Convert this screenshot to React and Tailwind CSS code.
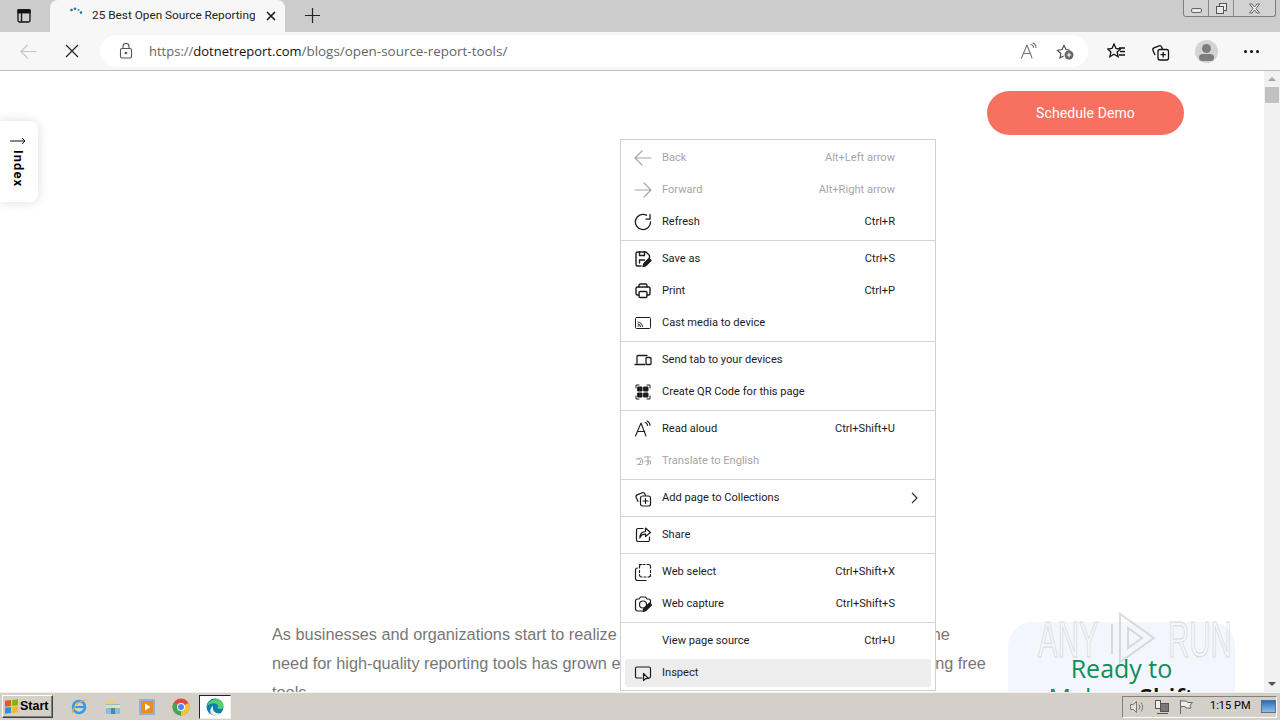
import React from "react";

const Ic = ({ children, size = 18, stroke = "currentColor", w = 1.2, className = "" }) => (
  <svg width={size} height={size} viewBox="0 0 18 18" fill="none" stroke={stroke} strokeWidth={w} strokeLinecap="round" strokeLinejoin="round" className={className}>
    {children}
  </svg>
);

const icons = {
  back: <Ic><path d="M17 9H1M8 2 1 9l7 7" /></Ic>,
  forward: <Ic><path d="M1 9h16M10 2l7 7-7 7" /></Ic>,
  refresh: <Ic w={1.3}><path d="M12.5 2.2A7.6 7.6 0 1 0 16.6 9" /><path d="M12 6.2h4V1.6" /></Ic>,
  save: (
    <Ic w={1.4}>
      <path d="M7 16H3.5A1.5 1.5 0 0 1 2 14.5v-11A1.5 1.5 0 0 1 3.5 2h8.5l3.5 3.5V8" />
      <path d="M5.5 2v3.5h5V2M5.5 13v-3h5" />
      <path d="M9 16.5l1-3 5-5 2 2-5 5z" fill="currentColor" />
    </Ic>
  ),
  print: (
    <Ic w={1.4}>
      <path d="M5 5V3.5A1.5 1.5 0 0 1 6.500 2h5A1.500 1.500 0 0 1 13 3.500V5" />
      <path d="M5 13H3.500A1.500 1.500 0 0 1 2 11.500v-5A1.500 1.500 0 0 1 3.500 5h11A1.500 1.500 0 0 1 16 6.500v5a1.500 1.500 0 0 1-1.500 1.500H13" />
      <rect x="5" y="9.500" width="8" height="6" rx="1.200" />
    </Ic>
  ),
  cast: (
    <Ic w={1}>
      <rect x="1.500" y="3.500" width="15" height="11" rx="1" />
      <path d="M4 8a4.500 4.500 0 0 1 4.500 4.500M4 10a2.500 2.500 0 0 1 2.500 2.500M4 12h.8" />
    </Ic>
  ),
  send: (
    <Ic w={1.3}>
      <path d="M3 12V5.500A1 1 0 0 1 4 4.500h9M1 13.500h10" />
      <rect x="12" y="6.500" width="5" height="7" rx="1" />
    </Ic>
  ),
  qr: (
    <Ic w={1}>
      <path d="M2 5V2h3M13 2h3v3M16 13v3h-3M5 16H2v-3" />
      <rect x="4" y="4" width="4" height="4" fill="currentColor" />
      <rect x="10" y="4" width="4" height="4" fill="currentColor" />
      <rect x="4" y="10" width="4" height="4" fill="currentColor" />
      <rect x="10" y="10" width="4" height="4" fill="currentColor" />
    </Ic>
  ),
  read: (
    <Ic w={1.1}>
      <path d="M1.500 16 7 3l5 13M3.300 11.500h7.400" />
      <path d="M11 2.500a3 3 0 0 1 2.500 3M13 1a5 5 0 0 1 3 4.500" />
    </Ic>
  ),
  translate: (
    <Ic w={1}>
      <path d="M2 7a3 3 0 1 1 1.500 5.500H7.500a1 1 0 0 0 1-1V8.500a2.500 2.500 0 0 0-4.500-1.500" />
      <path d="M10.500 9.500a2.200 2.200 0 1 1 2 3.500M10.500 5h6M14 5v8M14 9h2.500v3" />
    </Ic>
  ),
  collections: (
    <Ic w={1.2}>
      <path d="M4 12.500 2.200 8.500a2 2 0 0 1 1-2.600l5-2.100a2 2 0 0 1 2.600 1L11.500 6.500" />
      <rect x="6.500" y="7" width="10" height="10" rx="2" />
      <path d="M11.500 9.500v5M9 12h5" />
    </Ic>
  ),
  share: (
    <Ic w={1.2}>
      <path d="M9 2.500H4A1.500 1.500 0 0 0 2.500 4v10A1.500 1.500 0 0 0 4 15.500h10a1.500 1.500 0 0 0 1.500-1.500v-3" />
      <path d="M11.500 2 16.500 6.500 11.500 10.500V8.200C8.500 8.200 6.800 9.500 5.800 12c0-4 2.200-6.500 5.700-6.500z" />
    </Ic>
  ),
  select: (
    <Ic w={1.2}>
      <path d="M5.500 1.500h1.500M9 1.500h2M13 1.500h1.500a2 2 0 0 1 2 2V5M16.500 7.500v2M16.500 11.500v.5a2 2 0 0 1-2 2H14M12 14h-2M8 14H7.500a2 2 0 0 1-2-2v-.5M5.500 9.500v-2M5.500 5V3.500a2 2 0 0 1 2-2" />
      <path d="M3.500 5A2 2 0 0 0 1.500 7v8.500a2 2 0 0 0 2 2H12" />
    </Ic>
  ),
  capture: (
    <Ic w={1.2}>
      <path d="M8 16H3.500a2 2 0 0 1-2-2V6a2 2 0 0 1 2-2H5L6.500 2h5L13 4h1.500a2 2 0 0 1 2 2v2" />
      <circle cx="9" cy="9.500" r="3.500" />
      <path d="M9 16.500l.8-2.800 5.700-5.700 2 2-5.700 5.700z" fill="currentColor" />
    </Ic>
  ),
  inspect: (
    <Ic w={1.2}>
      <path d="M8 14H3a1.500 1.500 0 0 1-1.500-1.500v-8A1.500 1.500 0 0 1 3 3h12a1.500 1.500 0 0 1 1.500 1.500v8A1.500 1.500 0 0 1 15 14h-.5" />
      <path d="M9.500 9.500v7l2-1.800 3-.2z" />
    </Ic>
  ),
};

const menuGroups = [
  [
    { label: "Back", key: "Alt+Left arrow", icon: "back", off: true },
    { label: "Forward", key: "Alt+Right arrow", icon: "forward", off: true },
    { label: "Refresh", key: "Ctrl+R", icon: "refresh" },
  ],
  [
    { label: "Save as", key: "Ctrl+S", icon: "save" },
    { label: "Print", key: "Ctrl+P", icon: "print" },
    { label: "Cast media to device", icon: "cast" },
  ],
  [
    { label: "Send tab to your devices", icon: "send" },
    { label: "Create QR Code for this page", icon: "qr" },
  ],
  [
    { label: "Read aloud", key: "Ctrl+Shift+U", icon: "read" },
    { label: "Translate to English", icon: "translate", off: true },
  ],
  [{ label: "Add page to Collections", icon: "collections", more: true }],
  [{ label: "Share", icon: "share" }],
  [
    { label: "Web select", key: "Ctrl+Shift+X", icon: "select" },
    { label: "Web capture", key: "Ctrl+Shift+S", icon: "capture" },
  ],
  [
    { label: "View page source", key: "Ctrl+U" },
    { label: "Inspect", icon: "inspect", hover: true },
  ],
];

function MenuRow({ item }) {
  return (
    <div className={`h-[32px] flex items-center pl-[13px] pr-[40px] ${item.off ? "text-[#a6a6a6]" : "text-[#1c1c1c]"} relative`}>
      {item.hover && <div className="absolute left-[4px] right-[4px] top-[2px] bottom-[2px] bg-[#ededed] rounded-[3px]"></div>}
      <span className="w-[28px] shrink-0 relative">{item.icon && icons[item.icon]}</span>
      <span className="flex-1 relative">{item.label}</span>
      {item.key && <span className="relative">{item.key}</span>}
      {item.more && (
        <svg width="10" height="12" viewBox="0 0 10 12" fill="none" stroke="#333" strokeWidth="1.2" className="absolute right-[15px]">
          <path d="M2 1l5 5-5 5" />
        </svg>
      )}
    </div>
  );
}

function ContextMenu() {
  return (
    <div className="absolute left-[620px] top-[68px] w-[316px] bg-white border border-[#d0d0d0] pt-[2px] pb-[1px] text-[11.1px] font-['Roboto',sans-serif]">
      {menuGroups.map((group, i) => (
        <div key={i} className={i > 0 ? "border-t border-[#d4d4d4] pt-[2px] mt-[2px]" : ""}>
          {group.map((item) => (
            <MenuRow key={item.label} item={item} />
          ))}
        </div>
      ))}
    </div>
  );
}

function TabBar() {
  return (
    <div className="h-[32px] bg-[#cccccc] flex items-end relative shrink-0">
      <div className="w-[50px] h-full flex items-center justify-center">
        <svg width="16" height="16" viewBox="0 0 16 16" fill="none" stroke="#111" strokeWidth="1.300" className="ml-[-2px]">
          <rect x="2" y="2" width="12" height="12" rx="1.500" />
          <path d="M2 4.500h12M5.500 4.500V14" />
          <path d="M2 2h12v2.500H2z" fill="#111" />
        </svg>
      </div>
      <div className="w-[235px] h-full bg-[#f7f7f7] rounded-t-[8px] flex items-center pl-[20px] text-[11.8px] text-[#222] font-['Roboto',sans-serif]">
        <svg width="14" height="10" viewBox="0 0 14 10" className="mt-[-8px] shrink-0" fill="#1a6fb0">
          <circle cx="1.500" cy="3" r="1.300" />
          <circle cx="5" cy="1.800" r="1.300" />
          <circle cx="8.500" cy="3" r="1" fill="#5c7f99" />
          <circle cx="11" cy="5.500" r="1.300" />
        </svg>
        <span className="ml-[8px] w-[163px] whitespace-nowrap overflow-hidden">25 Best Open Source Reporting Tools</span>
        <svg width="10" height="10" viewBox="0 0 10 10" stroke="#111" strokeWidth="1.500" className="ml-[11px]">
          <path d="M1 1l8 8M9 1l-8 8" />
        </svg>
      </div>
      <div className="h-full flex items-center ml-[20px] pb-[1px]">
        <svg width="15" height="15" viewBox="0 0 15 15" stroke="#222" strokeWidth="1.200">
          <path d="M7.500 0v15M0 7.500h15" />
        </svg>
      </div>
      <div className="absolute right-[4px] top-0 h-[17px] w-[93px] flex border border-t-0 border-[#7f7f7f] rounded-b-[3px] bg-[#d2d2d2]">
        <div className="w-[25px] border-r border-[#8a8a8a] flex items-center justify-center">
          <div className="w-[11px] h-[5px] mt-[4px] border border-[#666] rounded-[2px] bg-[#e8e8e8]"></div>
        </div>
        <div className="w-[25px] border-r border-[#8a8a8a] flex items-center justify-center">
          <svg width="13" height="13" viewBox="0 0 13 13" fill="#e8e8e8" stroke="#555">
            <rect x="4.500" y="1.500" width="7" height="7" />
            <rect x="1.500" y="4.500" width="7" height="7" />
          </svg>
        </div>
        <div className="flex-1 flex items-center justify-center">
          <svg width="13" height="11" viewBox="0 0 13 11" stroke="#666" fill="none">
            <path d="M1.500 1h2.500l2.500 3L9 1h2.500l-3.500 4.500 3.500 4.500H9L6.500 7 4 10H1.500L5 5.500z" fill="#eee" />
          </svg>
        </div>
      </div>
    </div>
  );
}

function ToolBar() {
  return (
    <div className="h-[39px] bg-[#f7f7f7] border-b border-[#bdbdbd] flex items-center shrink-0 text-[#222]">
      <div className="w-[100px] flex items-center pl-[20px]">
        <Ic size={17} stroke="#c4c4c4" w={1.300}><path d="M17 9H1M8 2 1 9l7 7" /></Ic>
        <svg width="14" height="14" viewBox="0 0 14 14" stroke="#222" strokeWidth="1.200" className="ml-[28px]">
          <path d="M1 1l12 12M13 1 1 13" />
        </svg>
      </div>
      <div className="w-[988px] h-[32px] bg-white rounded-full flex items-center pl-[19px] pr-[14px]">
        <svg width="14" height="16" viewBox="0 0 14 16" fill="none" stroke="#555" strokeWidth="1.100">
          <rect x="1.500" y="5.500" width="11" height="9.500" rx="1.500" />
          <path d="M4 5.500V3.500a3 3 0 0 1 6 0v2" />
          <circle cx="7" cy="10" r=".8" fill="#555" />
        </svg>
        <span className="ml-[16px] pt-[1px] text-[13px] text-[#666] font-['Open_Sans',sans-serif]">
          https://<span className="text-[#111]">dotnetreport.com</span>
          <span className="text-[13.45px]">/blogs/open-source-report-tools/</span>
        </span>
        <div className="ml-auto flex items-center gap-[18px] text-[#777]">
          <Ic size={18} w={1.100} className="ml-[1px]">
            <path d="M1.500 16 7 3l5 13M3.300 11.500h7.400" />
            <path d="M11 2.500a3 3 0 0 1 2.500 3M13 1a5 5 0 0 1 3 4.500" />
          </Ic>
          <svg width="18" height="18" viewBox="0 0 18 18" fill="none" stroke="#444" strokeWidth="1.100">
            <path d="M7.500 14 4 16l.8-4.500L1.500 8.300l4.500-.7L8 3.500l2 4.100 3.500.5" />
            <circle cx="13" cy="13" r="4.500" fill="#666" stroke="none" />
            <path d="M13 10.800v4.400M10.800 13h4.400" stroke="#fff" />
          </svg>
        </div>
      </div>
      <div className="flex-1 flex items-center pl-[19px] gap-[25px]">
        <svg width="19" height="19" viewBox="0 0 19 19" fill="none" stroke="#111" strokeWidth="1.300">
          <path d="M7 2 9 6.500l4.500.5-3.400 3 1 4.700L7 12.300l-4.100 2.400 1-4.700L.6 7 5 6.500z" />
          <path d="M12 6h6M13 9.500h5M12 13h6" />
        </svg>
        <svg width="19" height="19" viewBox="0 0 19 19" fill="none" stroke="#111" strokeWidth="1.300">
          <path d="M4 13 2 8.500a2 2 0 0 1 1-2.600l5-2a2 2 0 0 1 2.600 1L11.500 7" />
          <rect x="7" y="7.500" width="10.500" height="10.500" rx="2" />
          <path d="M12.200 10v5.500M9.500 12.700H15" />
        </svg>
        <div className="w-[23px] h-[23px] rounded-full bg-[#d4d4d4] overflow-hidden relative">
          <div className="absolute left-[7px] top-[4px] w-[9px] h-[9px] rounded-full bg-[#7d7d7d]"></div>
          <div className="absolute left-[4px] top-[14px] w-[15px] h-[7px] rounded-full bg-[#7d7d7d]"></div>
        </div>
        <div className="ml-[1px] flex gap-[3px]">
          <span className="w-[3px] h-[3px] bg-[#111] rounded-full"></span>
          <span className="w-[3px] h-[3px] bg-[#111] rounded-full"></span>
          <span className="w-[3px] h-[3px] bg-[#111] rounded-full"></span>
        </div>
      </div>
    </div>
  );
}

function Scrollbar() {
  return (
    <div className="w-[16px] bg-[#f1f1f1] flex flex-col items-center justify-between shrink-0">
      <div className="w-full">
        <div className="h-[16px] flex items-center justify-center">
          <div className="border-x-[4px] border-x-transparent border-b-[4px] border-b-[#a3a3a3]"></div>
        </div>
        <div className="h-[16px] bg-[#c1c1c1] mx-[1px]"></div>
      </div>
      <div className="h-[16px] flex items-center justify-center">
        <div className="border-x-[4px] border-x-transparent border-t-[4px] border-t-[#505050]"></div>
      </div>
    </div>
  );
}

function Page() {
  return (
    <div className="flex-1 flex flex-col overflow-hidden min-w-0">
      <div className="flex justify-end pr-[80px] pt-[20px] shrink-0">
        <button className="w-[197px] h-[44px] rounded-full bg-[#f87060] text-white text-[14px] tracking-[0.1px] font-['Roboto',sans-serif]">
          Schedule Demo
        </button>
      </div>
      <div className="flex mt-[487px] shrink-0">
        <p className="ml-[272px] mt-[-2px] w-[713px] shrink-0 text-[16.3px] leading-[29px] text-[#777777] font-['Liberation_Sans',sans-serif] whitespace-nowrap">
          As businesses and organizations start to realize the value of the data and reporting needs, the
          <br />
          need for high-quality reporting tools has grown exponentially, and so has the line of the leading free
          <br />
          tools.
        </p>
        <div className="ml-[23px] w-[227px] h-[120px] rounded-[24px] bg-[#f3f7fd] text-center text-[25px] leading-[29px] pt-[32px] font-['Open_Sans',sans-serif] text-[#0a8f5c] shrink-0">
          Ready to
          <br />
          Make a <span className="text-[#111] font-semibold">Shift</span>
        </div>
      </div>
    </div>
  );
}

function Watermark() {
  return (
    <div className="absolute left-[1038px] top-[539px] w-[196px] h-[56px] flex items-center opacity-60 pointer-events-none font-['Liberation_Sans',sans-serif] text-[50px] leading-none text-transparent [-webkit-text-stroke:1px_#c4c4c4]">
      <span className="inline-block mt-[4px] origin-left scale-x-[0.59] w-[130px] whitespace-nowrap">ANY</span>
      <svg width="54" height="56" viewBox="0 0 54 56" fill="none" stroke="#c4c4c4" strokeWidth="2" className="absolute left-[72px]">
        <path d="M2 14v30M10 4v48l34-24z" />
        <path d="M18 18v20l14-10z" />
      </svg>
      <span className="inline-block mt-[4px] origin-left scale-x-[0.59] w-[66px] whitespace-nowrap">RUN</span>
    </div>
  );
}

function Taskbar() {
  const Square = ({ c }) => <span className="block w-[6px] h-[6px]" style={{ background: c }}></span>;
  return (
    <div className="h-[28px] bg-[#d4d0c8] border-t border-[#f2f0ea] flex items-center shrink-0 relative">
      <div className="ml-[2px] w-[51px] h-[23px] bg-[#d4d0c8] border border-t-white border-l-white border-r-[#404040] border-b-[#404040] flex items-center pl-[2px] gap-[2px] shadow-[inset_-1px_-1px_0_#808080]">
        <span className="grid grid-cols-2 gap-[1px] -skew-y-6">
          <Square c="#e8562a" />
          <Square c="#7fba00" />
          <Square c="#2f8fe0" />
          <Square c="#f4bb1c" />
        </span>
        <span className="text-[12.5px] font-bold text-black font-['Liberation_Sans',sans-serif]">Start</span>
      </div>
      <div className="ml-[17px] flex items-center">
        <svg width="18" height="18" viewBox="0 0 18 18" fill="none">
          <circle cx="9" cy="9" r="6" stroke="#3a9be0" strokeWidth="2.500" />
          <path d="M3.500 9h11" stroke="#3a9be0" strokeWidth="2" />
          <path d="M2 15C4 8 10 2 16 2" stroke="#e8b923" strokeWidth="1.200" />
        </svg>
        <svg width="18" height="18" viewBox="0 0 18 18" className="ml-[16px]">
          <path d="M2 6h14v10H2z" fill="#8fbcd6" />
          <path d="M3 3h8l2 3H3z" fill="#edcf7a" />
          <path d="M2 7h14v3H2z" fill="#f2dc96" />
          <path d="M7 10h4v6H7z" fill="#4d86a8" />
        </svg>
        <svg width="18" height="18" viewBox="0 0 18 18" className="ml-[16px]">
          <rect x="1" y="1" width="16" height="16" fill="#8db4d8" />
          <rect x="3" y="3" width="12" height="12" fill="#ee8a1e" />
          <path d="M7 5.500v7l5.500-3.500z" fill="#fff" />
        </svg>
        <svg width="18" height="18" viewBox="0 0 18 18" className="ml-[16px]">
          <circle cx="9" cy="9" r="8.500" fill="#dd4b3e" />
          <path d="M9 9 16.500 5A8.500 8.500 0 0 1 9 17.500z" fill="#f5c33b" />
          <path d="M9 9 9 17.500A8.500 8.500 0 0 1 1.600 5z" fill="#3fa757" />
          <circle cx="9" cy="9" r="4" fill="#fff" />
          <circle cx="9" cy="9" r="3" fill="#4a8af0" />
        </svg>
        <div className="ml-[9px] w-[32px] h-[24px] bg-white border border-t-[#222] border-l-[#222] border-r-[#eee] border-b-[#eee] flex items-center justify-center">
          <svg width="18" height="18" viewBox="0 0 18 18">
            <circle cx="9" cy="9" r="8.500" fill="#0f7fa8" />
            <path d="M1 8C3 2 9 .5 13 1.500c3 1 4.500 4 4.500 7 0 2-2 2.500-4 2.500-2.500 0-2-2-1-3C11 5 6 3.500 1 8z" fill="#56cf6d" />
            <path d="M7 10c0 4 4 6.500 8 5-3 3-7 3-9.500 1C3.500 14 4 10 7 8z" fill="#fff" opacity=".9" />
          </svg>
        </div>
      </div>
      <div className="ml-auto mr-[3px] w-[155px] h-[22px] border border-t-[#808080] border-l-[#808080] border-r-white border-b-white flex items-center pl-[6px] text-[#555]">
        <svg width="16" height="16" viewBox="0 0 16 16" fill="none" stroke="#777">
          <path d="M1.500 5.500h3l3-3v11l-3-3h-3z" fill="#ddd" />
          <path d="M10 5.500a4 4 0 0 1 0 5M12 3.500a7 7 0 0 1 0 9" />
        </svg>
        <svg width="16" height="16" viewBox="0 0 16 16" className="ml-[9px]" fill="none" stroke="#555">
          <rect x="1.500" y="1.500" width="5" height="8" fill="#eee" />
          <rect x="6.500" y="4.500" width="8" height="8" fill="#777" />
          <path d="M3 14.500h11" />
        </svg>
        <svg width="16" height="16" viewBox="0 0 16 16" className="ml-[8px]" fill="none" stroke="#666">
          <path d="M2.500 1v14" />
          <path d="M2.500 2h6l1 1.500h5l-2.500 3 1 2.500H8L7 7.500H2.500z" fill="#eee" />
        </svg>
        <span className="ml-[16px] w-[40px] whitespace-nowrap text-[11px] text-black font-['Roboto',sans-serif]">1:15 PM</span>
        <div className="ml-[11px] w-[15px] h-[13px] bg-gradient-to-b from-[#2a6fb8] to-[#8cc0e8] border border-[#5a6f88]"></div>
      </div>
    </div>
  );
}

export default function App() {
  return (
    <div className="w-[1280px] h-[720px] flex flex-col overflow-hidden bg-white relative">
      <TabBar />
      <ToolBar />
      <div className="h-[621px] flex relative shrink-0 overflow-hidden">
        <Page />
        <Scrollbar />
        <div className="absolute left-0 top-[50px] w-[38px] h-[81px] bg-white rounded-r-[8px] shadow-[0_0_12px_rgba(0,0,0,0.14)] flex flex-col items-center pt-[16px] pr-[2px] text-black">
          <svg width="16" height="8" viewBox="0 0 16 8" fill="none" stroke="#111">
            <path d="M0 4h15M12 1l3 3-3 3" />
          </svg>
          <span className="mt-[5px] text-[13px] font-bold tracking-[1px] font-['Roboto',sans-serif] [writing-mode:vertical-rl]">Index</span>
        </div>
        <ContextMenu />
        <Watermark />
      </div>
      <Taskbar />
    </div>
  );
}
